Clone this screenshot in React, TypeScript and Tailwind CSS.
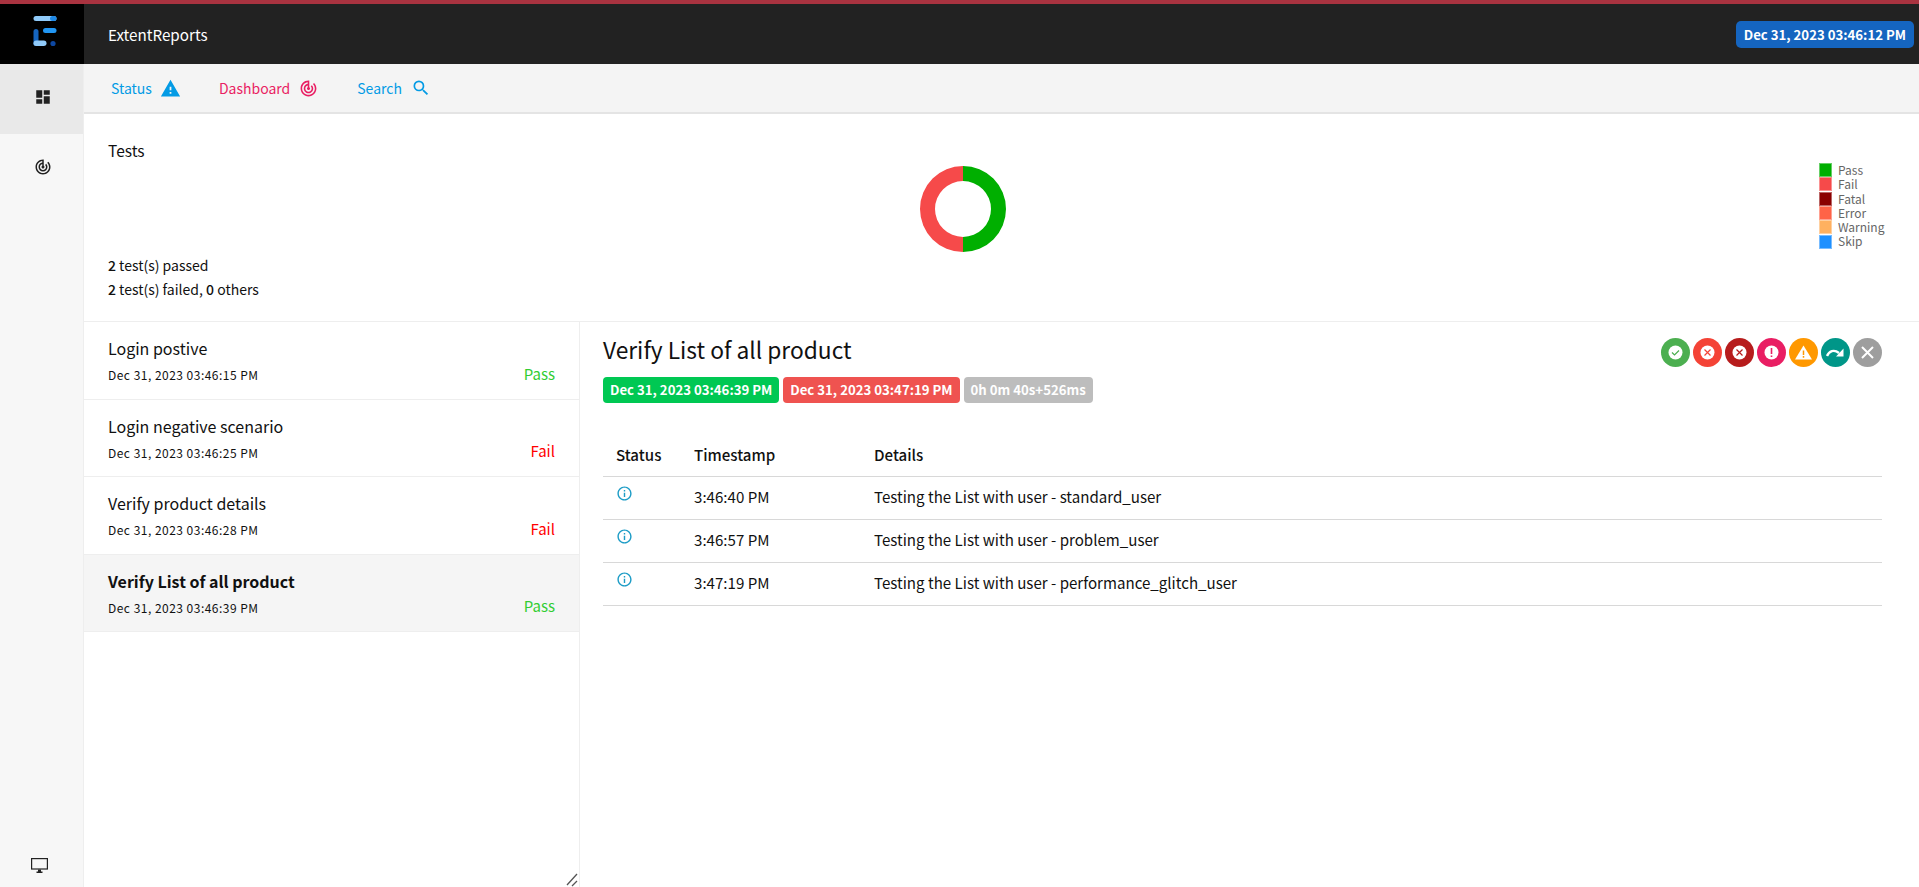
import { MdDashboard, MdInfoOutline, MdSearch, MdTrackChanges, MdWarning } from "react-icons/md";

const sans = "font-['Noto_Sans_CJK_SC','Source_Sans_Pro',sans-serif]";

const tests = [
  { name: "Login postive", time: "Dec 31, 2023 03:46:15 PM", status: "Pass" },
  { name: "Login negative scenario", time: "Dec 31, 2023 03:46:25 PM", status: "Fail" },
  { name: "Verify product details", time: "Dec 31, 2023 03:46:28 PM", status: "Fail" },
  { name: "Verify List of all product", time: "Dec 31, 2023 03:46:39 PM", status: "Pass", active: true },
];

const logs = [
  { time: "3:46:40 PM", detail: "Testing the List with user - standard_user" },
  { time: "3:46:57 PM", detail: "Testing the List with user - problem_user" },
  { time: "3:47:19 PM", detail: "Testing the List with user - performance_glitch_user" },
];

const legend = [
  { label: "Pass", color: "bg-[#00af00]", ring: "border-[#66cf66]" },
  { label: "Fail", color: "bg-[#f64a4a]", ring: "border-[#fa9292]" },
  { label: "Fatal", color: "bg-[#8b0000]", ring: "border-[#b96666]" },
  { label: "Error", color: "bg-[#ff6347]", ring: "border-[#ffa191]" },
  { label: "Warning", color: "bg-[#ffb160]", ring: "border-[#ffd0a0]" },
  { label: "Skip", color: "bg-[#1e90ff]", ring: "border-[#78bcff]" },
];

function Logo() {
  return (
    <svg width="24" height="32" viewBox="0 0 24 32">
      <rect x="0.5" y="0" width="23" height="5" rx="2.5" fill="#90caf9" />
      <rect x="17" y="0" width="6.5" height="5" rx="2.5" fill="#1e88e5" />
      <rect x="0.5" y="13" width="5" height="17" rx="2.5" fill="#1565c0" />
      <rect x="10" y="12" width="13.5" height="5" rx="2.5" fill="#2196f3" />
      <rect x="0.5" y="24.5" width="13" height="5.5" rx="2.75" fill="#90caf9" />
      <circle cx="20" cy="27.5" r="2.6" fill="#0d47a1" />
    </svg>
  );
}

function CircleIcon({ color, children }: { color: string; children: React.ReactNode }) {
  return (
    <span className={`flex h-[29px] w-[29px] items-center justify-center rounded-full ${color}`}>
      <svg width="19" height="19" viewBox="0 0 19 19">
        {children}
      </svg>
    </span>
  );
}

function XMark({ stroke }: { stroke: string }) {
  return <path d="M6.5 6.5l6 6M12.5 6.5l-6 6" stroke={stroke} strokeWidth="1.2" fill="none" />;
}

export default function App() {
  return (
    <div className={`flex h-[887px] w-[1919px] flex-col overflow-hidden bg-white text-[#111] ${sans}`}>
      <div className="h-[4px] bg-[#a93340]" />
      <header className="flex h-[60px] items-center bg-[#222222]">
        <div className="flex h-full w-[84px] items-center justify-center bg-black pb-[4px] pl-[6px]">
          <Logo />
        </div>
        <span className="ml-[24px] text-[15.2px] text-white">ExtentReports</span>
        <span className="mr-[5px] ml-auto rounded-[5px] bg-[#1565c0] px-[8px] text-[13.2px] leading-[27px] font-bold text-white">
          Dec 31, 2023 03:46:12 PM
        </span>
      </header>

      <div className="flex min-h-0 flex-1">
        <aside className="flex w-[84px] flex-col border-r border-[#eeeeee] bg-[#f7f7f7]">
          <div className="flex h-[70px] w-full items-center justify-center bg-[#e9e9e9] pb-[5px] pl-[3px]">
            <MdDashboard size={18} color="#222" />
          </div>
          <div className="flex h-[70px] w-full items-center justify-center pb-[5px] pl-[3px]">
            <MdTrackChanges size={18} color="#222" />
          </div>
          <svg className="mt-auto mb-[14px] ml-[31px]" width="17" height="15" viewBox="0 0 17 15">
            <rect x="0.6" y="0.6" width="15.8" height="10.4" fill="none" stroke="#222" strokeWidth="1.2" />
            <path d="M7 11.5h3V13.5h1.5V15h-6V13.5H7z" fill="#222" />
          </svg>
        </aside>

        <main className="flex min-w-0 flex-1 flex-col">
          <nav className="flex h-[50px] items-center border-b-2 border-[#e4e4e4] bg-[#f4f4f4] pl-[27px] text-[14px]">
            <a className="flex items-center text-[#039be5]">
              Status <MdWarning size={21} className="ml-[8px]" />
            </a>
            <a className="ml-[38px] flex items-center text-[#e91e63]">
              Dashboard <MdTrackChanges size={19} className="ml-[9px]" />
            </a>
            <a className="ml-[39px] flex items-center text-[#039be5]">
              Search <MdSearch size={20} className="ml-[9px]" />
            </a>
          </nav>

          <section className="flex h-[208px] border-b border-[#eeeeee]">
            <div className="flex w-[835px] flex-col pt-[24px] pl-[24px] text-[14px] leading-[24px]">
              <p className="text-[15.5px]">Tests</p>
              <div className="mt-auto mb-[20px]">
                <p><b className="font-medium">2</b> test(s) passed</p>
                <p><b className="font-medium">2</b> test(s) failed, <b className="font-medium">0</b> others</p>
              </div>
            </div>
            <div className="flex items-center pb-[18px]">
              <svg width="88" height="88" viewBox="0 0 88 88">
                <path d="M44 1a43 43 0 0 1 0 86V72a28 28 0 0 0 0-56z" fill="#00af00" />
                <path d="M44 1a43 43 0 0 0 0 86V72a28 28 0 0 1 0-56z" fill="#f64a4a" />
              </svg>
            </div>
            <ul className="ml-auto w-[100px] pt-[49px] text-[12px] leading-[14.3px] text-[#666666]">
              {legend.map((l) => (
                <li key={l.label} className="flex items-center">
                  <span className={`h-[14px] w-[13px] border ${l.color} ${l.ring}`} />
                  <span className="ml-[6px]">{l.label}</span>
                </li>
              ))}
            </ul>
          </section>

          <div className="flex min-h-0 flex-1">
            <div className="relative w-[496px] border-r border-[#eeeeee]">
              {tests.map((t) => (
                <div
                  key={t.name}
                  className={`flex h-[77.5px] flex-col border-b border-[#eeeeee] px-[24px] pt-[13px] ${t.active ? "bg-[#f5f5f5]" : ""}`}
                >
                  <p className={`text-[16px] leading-[27px] ${t.active ? "font-bold" : ""}`}>{t.name}</p>
                  <div className="mt-[3px] flex items-center justify-between">
                    <span className="text-[12px] leading-[20px] tracking-[0.48px]">{t.time}</span>
                    <span className={`-mt-[3px] text-[15px] leading-[20px] ${t.status === "Pass" ? "text-[#32cd32]" : "text-[#ff0000]"}`}>
                      {t.status}
                    </span>
                  </div>
                </div>
              ))}
              <svg className="absolute right-[1px] bottom-0" width="12" height="14" viewBox="0 0 12 14">
                <path d="M1 12L11 1M6 13l5-5" stroke="#555" strokeWidth="1.3" fill="none" />
              </svg>
            </div>

            <div className="min-w-0 flex-1 pt-[10px] pr-[37px] pl-[23px]">
              <div className="flex items-start justify-between">
                <div>
                  <h2 className="text-[22.75px] leading-[36px]">Verify List of all product</h2>
                  <div className="mt-[9px] flex gap-[4px] text-[13.2px] leading-[26px] font-bold text-white">
                    <span className="rounded-[4px] bg-[#00c853] px-[7px]">Dec 31, 2023 03:46:39 PM</span>
                    <span className="rounded-[4px] bg-[#ef5350] px-[7px]">Dec 31, 2023 03:47:19 PM</span>
                    <span className="rounded-[4px] bg-[#bdbdbd] px-[7px]">0h 0m 40s+526ms</span>
                  </div>
                </div>
                <div className="mt-[6px] flex gap-[3px]">
                  <CircleIcon color="bg-[#4caf50]">
                    <circle cx="9.5" cy="9.5" r="7" fill="#fff" />
                    <path d="M6 9.5l2.5 2.5 4.5-4.5" stroke="#4caf50" strokeWidth="1.2" fill="none" />
                  </CircleIcon>
                  <CircleIcon color="bg-[#f44336]">
                    <circle cx="9.5" cy="9.5" r="7" fill="#fff" />
                    <XMark stroke="#f44336" />
                  </CircleIcon>
                  <CircleIcon color="bg-[#b71c1c]">
                    <circle cx="9.5" cy="9.5" r="7" fill="#fff" />
                    <XMark stroke="#b71c1c" />
                  </CircleIcon>
                  <CircleIcon color="bg-[#e91e63]">
                    <circle cx="9.5" cy="9.5" r="7" fill="#fff" />
                    <path d="M9.5 5v6M9.5 12.5v1.6" stroke="#e91e63" strokeWidth="1.6" fill="none" />
                  </CircleIcon>
                  <CircleIcon color="bg-[#ff9800]">
                    <path d="M9.5 2.5L18 16.5H1z" fill="#fff" />
                    <path d="M9.5 7.5v4.5M9.5 13v1.8" stroke="#ff9800" strokeWidth="1.5" fill="none" />
                  </CircleIcon>
                  <CircleIcon color="bg-[#009688]">
                    <path d="M1 13C3 8 8 6 13 10" stroke="#fff" strokeWidth="2.4" fill="none" />
                    <path d="M17.5 5.5V13.5H10z" fill="#fff" />
                  </CircleIcon>
                  <CircleIcon color="bg-[#9e9e9e]">
                    <path d="M4 4l11 11M15 4L4 15" stroke="#fff" strokeWidth="2" fill="none" />
                  </CircleIcon>
                </div>
              </div>

              <table className="mt-[30px] w-full text-[15.1px]">
                <thead>
                  <tr className="h-[43px] border-b border-[#d8d8d8] text-left">
                    <th className="w-[79px] pt-[1px] pl-[13px] font-medium">Status</th>
                    <th className="w-[180px] pt-[1px] pl-[12px] font-medium">Timestamp</th>
                    <th className="pt-[1px] pl-[12px] font-medium">Details</th>
                  </tr>
                </thead>
                <tbody>
                  {logs.map((l) => (
                    <tr key={l.time} className="h-[43px] border-b border-[#d8d8d8]">
                      <td className="pb-[8px] pl-[13px] text-[#1c9cc6]">
                        <MdInfoOutline size={17} />
                      </td>
                      <td className="pb-[2px] pl-[12px]">{l.time}</td>
                      <td className="pb-[2px] pl-[12px]">{l.detail}</td>
                    </tr>
                  ))}
                </tbody>
              </table>
            </div>
          </div>
        </main>
      </div>
    </div>
  );
}
